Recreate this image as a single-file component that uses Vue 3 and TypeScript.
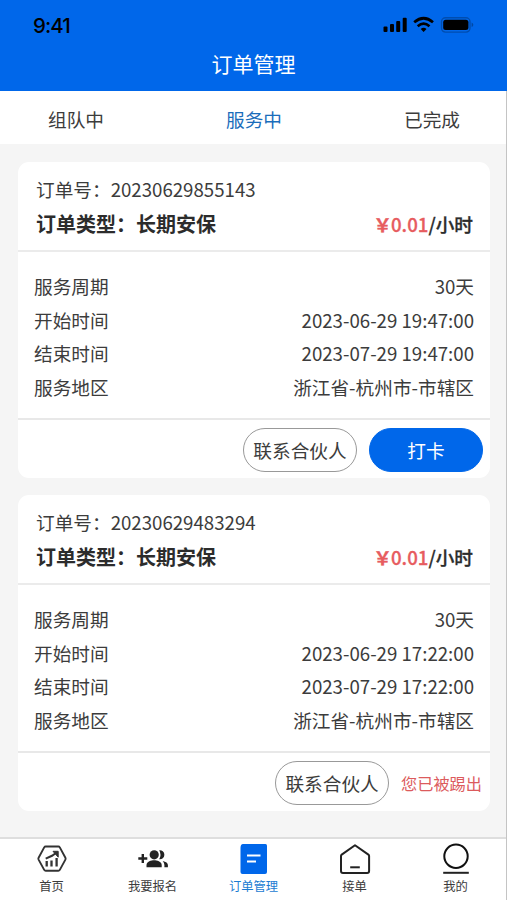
<script setup lang="ts">
import { ref } from 'vue'

interface Order {
  id: string
  type: string
  price: string
  rows: { label: string; value: string }[]
  kicked: boolean
}

const tabs: string[] = ['组队中', '服务中', '已完成']
const activeTab = ref<number>(1)

const makeRows = (time: string) => [
  { label: '服务周期', value: '30天' },
  { label: '开始时间', value: `2023-06-29 ${time}` },
  { label: '结束时间', value: `2023-07-29 ${time}` },
  { label: '服务地区', value: '浙江省-杭州市-市辖区' },
]

const orders: Order[] = [
  { id: '20230629855143', type: '长期安保', price: '0.01', rows: makeRows('19:47:00'), kicked: false },
  { id: '20230629483294', type: '长期安保', price: '0.01', rows: makeRows('17:22:00'), kicked: true },
]

const navItems: { key: string; label: string }[] = [
  { key: 'home', label: '首页' },
  { key: 'join', label: '我要报名' },
  { key: 'orders', label: '订单管理' },
  { key: 'accept', label: '接单' },
  { key: 'mine', label: '我的' },
]
const activeNav = ref<string>('orders')
</script>

<template>
  <div class="page">
    <header class="header">
      <div class="status">
        <span class="clock">9:41</span>
        <svg class="status-icons" width="94" height="20" viewBox="0 0 94 20">
          <rect x="0.5" y="11.5" width="4" height="5.5" rx="1" />
          <rect x="7" y="9" width="4" height="8" rx="1" />
          <rect x="13.2" y="6" width="4" height="11" rx="1" />
          <rect x="19.7" y="2.7" width="4" height="14.3" rx="1" />
          <g fill="none" stroke="#000" stroke-width="2.7">
            <path d="M31.2 7.2Q40.6-.7 50 7.2" />
            <path d="M34.7 11.2Q40.6 6.2 46.5 11.2" />
          </g>
          <path d="M37.7 14Q40.6 11.6 43.5 14L40.6 17Z" />
          <rect x="58.5" y="2.700" width="28.500" height="14.400" rx="4" fill="none" stroke="#000" stroke-opacity=".25" stroke-width="1.400" />
          <rect x="60.200" y="4.700" width="25.200" height="10.400" rx="2.500" />
          <path d="M88.600 7.500v4.600q1.700-.7 1.700-2.300t-1.700-2.300Z" opacity=".3" />
        </svg>
      </div>
      <h1 class="title">订单管理</h1>
    </header>

    <div class="frame">
      <nav class="tabs">
        <button
          v-for="(tab, i) in tabs"
          :key="tab"
          class="tab"
          :class="{ active: i === activeTab }"
          @click="activeTab = i"
        >{{ tab }}</button>
      </nav>

      <main class="list">
        <article v-for="order in orders" :key="order.id" class="card">
          <div class="card-head">
            <div class="order-no">订单号：{{ order.id }}</div>
            <div class="order-type">
              <span>订单类型：{{ order.type }}</span>
              <span class="rate"><span class="price"><span class="yen">￥</span>{{ order.price }}</span>/小时</span>
            </div>
          </div>
          <dl class="details">
            <div v-for="row in order.rows" :key="row.label" class="row">
              <dt>{{ row.label }}</dt>
              <dd>{{ row.value }}</dd>
            </div>
          </dl>
          <div class="actions">
            <button class="btn">联系合伙人</button>
            <span v-if="order.kicked" class="kicked">您已被踢出</span>
            <button v-else class="btn primary">打卡</button>
          </div>
        </article>
      </main>

      <footer class="nav">
        <button
          v-for="item in navItems"
          :key="item.key"
          class="nav-item"
          :class="{ active: item.key === activeNav }"
          @click="activeNav = item.key"
        >
          <svg v-if="item.key === 'home'" class="icon" viewBox="0 0 32 32">
            <path d="M9.700 3.500h12.600q1 0 1.500.9l5.600 10.300q.5 1 0 1.900l-5.600 10.300q-.5.900-1.500.9H9.700q-1 0-1.500-.9L2.600 16.600q-.5-1 0-1.900L8.200 4.400q.5-.9 1.500-.9Z" fill="none" stroke="#333" stroke-width="1.900" />
            <path d="M10.700 18v5.500M15.500 17.500v6M20.600 15v8.500" fill="none" stroke="#333" stroke-width="2.300" />
            <path d="M9.700 15.600l6.300-2.800 4-2.800" fill="none" stroke="#333" stroke-width="2.100" />
            <path d="M17 8.300h5.200v5.900Z" fill="#333" stroke="#333" />
          </svg>
          <svg v-else-if="item.key === 'join'" class="icon" viewBox="0 0 32 32">
            <path d="M1.300 15.500h9M5.800 11v9" fill="none" stroke="#222" stroke-width="2.400" />
            <circle cx="17.200" cy="11.800" r="4.600" fill="#222" />
            <path d="M9.500 24.300v-2.300c0-3.300 5-4.700 7.600-4.700s7.600 1.400 7.600 4.700v2.300Z" fill="#222" />
            <path d="M22.200 7.300a4.500 4.500 0 1 1 0 8.900q2.600-4.500 0-8.900ZM25.700 17.900c3.300.7 5.200 2 5.200 4.200v2.200h-3.500v-2.300q0-2.300-1.700-4.100Z" fill="#222" />
          </svg>
          <svg v-else-if="item.key === 'orders'" class="icon" viewBox="0 0 32 32">
            <path d="M5 1.100H27.500q1.500 0 1.500 1.500V28.900q0 2-2 2H4.500q-2 0-2-2V5Q2.500 1.100 5 1.100Z" fill="#0067ea" />
            <path d="M9 12.400h13.500M9 18.400h9" fill="none" stroke="#fff" stroke-width="2" />
          </svg>
          <svg v-else-if="item.key === 'accept'" class="icon" viewBox="0 0 32 32">
            <path d="M16 2.200 29.400 11.600q.7.500.7 1.300V28q0 2-2 2H4q-2 0-2-2V12.900q0-.8.700-1.300Z" fill="none" stroke="#222" stroke-width="2" stroke-linejoin="round" />
            <path d="M11.200 24.300h9.600" stroke="#222" stroke-width="2" />
          </svg>
          <svg v-else class="icon" viewBox="0 0 32 32">
            <circle cx="16" cy="13.200" r="11.700" fill="none" stroke="#111" stroke-width="2" />
            <path d="M3.200 29.800h25.600" stroke="#222" stroke-width="2" />
          </svg>
          <span>{{ item.label }}</span>
        </button>
      </footer>
    </div>
  </div>
</template>

<style>
body {
  margin: 0;
  background: #f5f5f5;
}
</style>

<style scoped>
* {
  box-sizing: border-box;
}
.page {
  display: flex;
  flex-direction: column;
  height: 900px;
  overflow: hidden;
  background: #f5f5f5;
  color: #3c3c3c;
  font-family: 'Noto Sans CJK SC', sans-serif;
}
button {
  margin: 0;
  padding: 0;
  border: 0;
  background: none;
  font: inherit;
  color: inherit;
}
.header {
  height: 91px;
  flex: none;
  background: #0067ea;
}
.status {
  display: flex;
  justify-content: space-between;
  padding: 13px 30px 0 33px;
  height: 48px;
  color: #000;
}
.clock {
  font: 500 20.500px/25px Inter, sans-serif;
  letter-spacing: -0.900px;
}
.status-icons {
  margin-top: 2px;
}
.title {
  margin: 0;
  color: #fff;
  font-size: 21px;
  font-weight: 400;
  line-height: 30px;
  text-align: center;
}
.frame {
  display: flex;
  flex-direction: column;
  flex: 1;
  border-right: 1px solid #c4c4c4;
}
.tabs {
  display: flex;
  justify-content: space-between;
  height: 53px;
  padding: 0 46px 0 48px;
  background: #fff;
}
.tab {
  font-size: 18.670px;
  line-height: 56px;
}
.tab.active {
  color: #1a6dbb;
}
.list {
  flex: 1;
  display: flex;
  flex-direction: column;
  gap: 17px;
  padding: 18px 16px 0 18px;
}
.card {
  height: 316px;
  border-radius: 11px;
  background: #fff;
}
.card-head {
  height: 90px;
  padding: 9px 17px 0 18px;
  border-bottom: 2px solid #ebebeb;
}
.order-no {
  font-size: 18.670px;
  line-height: 36px;
}
.order-type {
  display: flex;
  justify-content: space-between;
  color: #2c2c2c;
  font-size: 20px;
  font-weight: 700;
  line-height: 34px;
}
.rate {
  font-size: 18.670px;
  font-weight: 500;
  -webkit-text-stroke: 0.300px currentColor;
}
.price {
  color: #e75c5f;
}
.yen {
  margin-right: -1px;
  font-weight: 700;
}
.details {
  margin: 0;
  height: 168px;
  padding: 17px 16px 0;
  border-bottom: 2px solid #e8e8e8;
  font-size: 18.670px;
  line-height: 33.600px;
}
.row {
  display: flex;
  justify-content: space-between;
}
.row dd {
  margin: 0;
}
.actions {
  display: flex;
  align-items: center;
  justify-content: flex-end;
  gap: 12px;
  height: 58px;
  padding: 1px 7px 0 0;
}
.btn {
  width: 114px;
  height: 44px;
  border: 1.500px solid #999;
  border-radius: 22px;
  font-size: 18.670px;
  line-height: 42px;
  white-space: nowrap;
}
.btn.primary {
  border-color: #0067ea;
  background: #0067ea;
  color: #fff;
}
.kicked {
  margin-right: 1px;
  color: #dc5b5d;
  font-size: 16.200px;
}
.nav {
  display: flex;
  flex: none;
  height: 63px;
  padding-left: 1px;
  border-top: 2px solid #dedede;
  background: #fff;
}
.nav-item {
  display: flex;
  flex: 1;
  flex-direction: column;
  align-items: center;
  padding-top: 4px;
  font-size: 12.300px;
  line-height: 22px;
}
.nav-item.active {
  color: #1b7cd2;
}
.icon {
  width: 32px;
  height: 32px;
}
</style>
